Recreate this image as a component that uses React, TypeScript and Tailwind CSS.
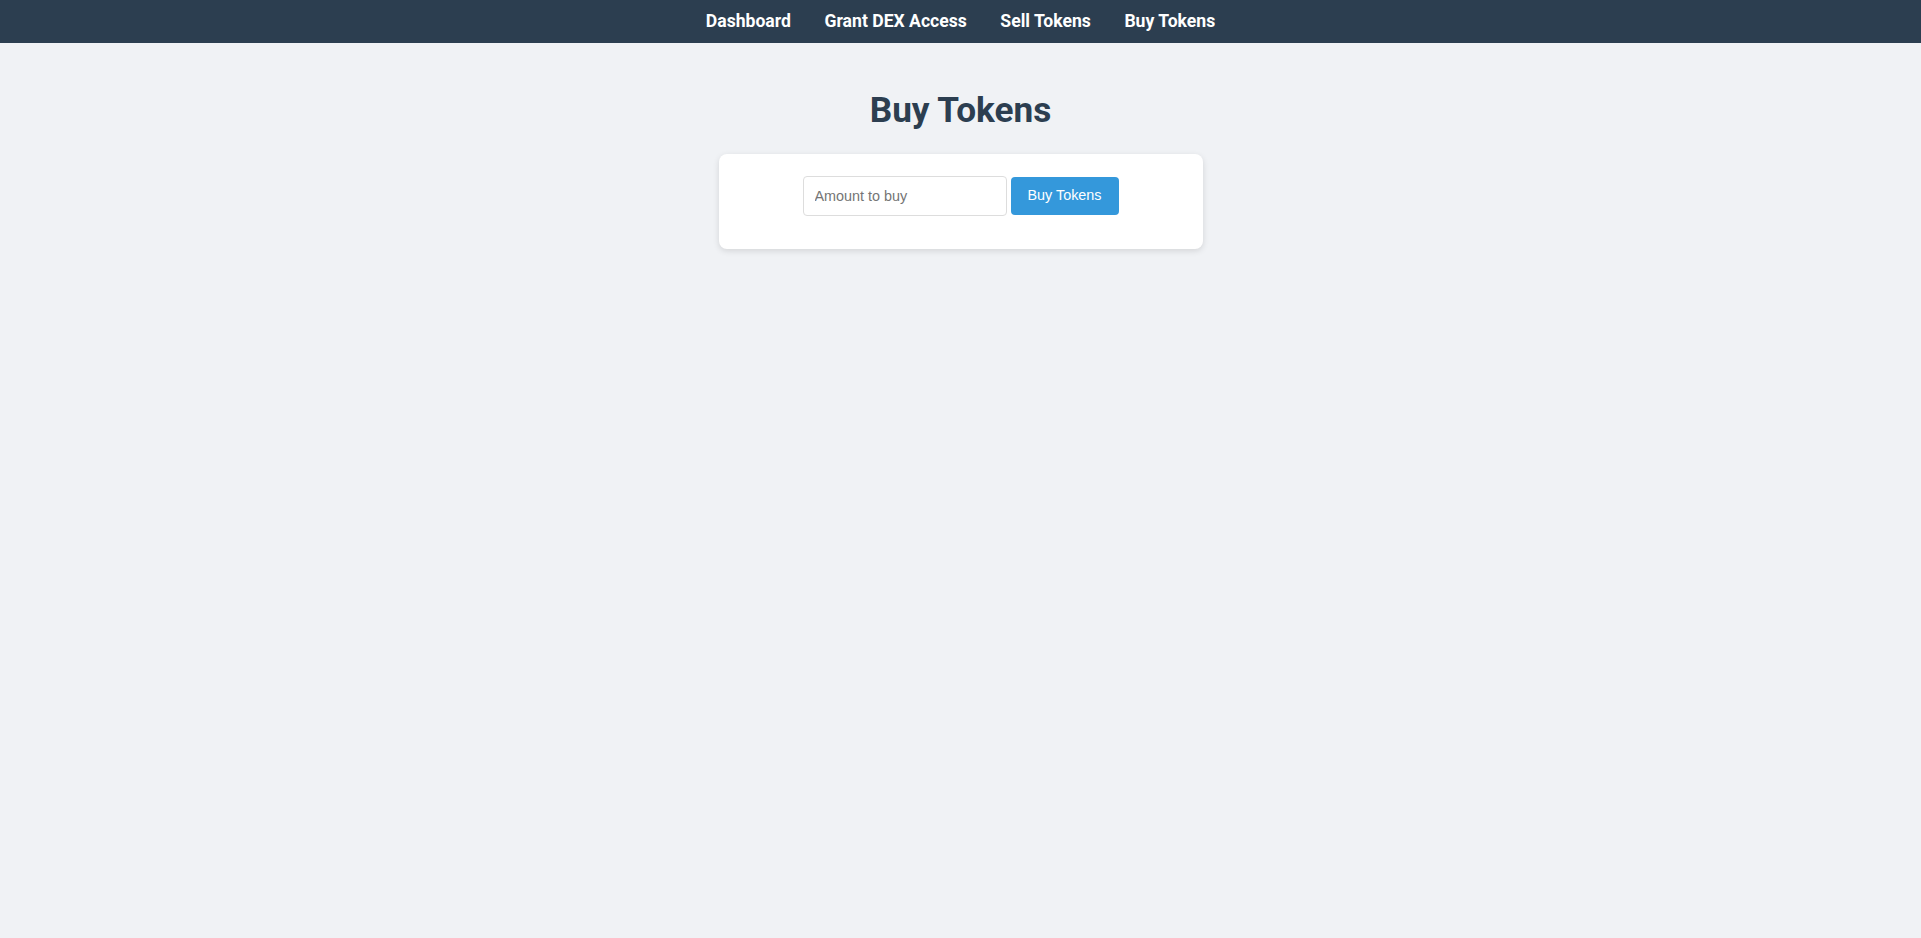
import React from 'react';

const links = ['Dashboard', 'Grant DEX Access', 'Sell Tokens', 'Buy Tokens'];

export default function App() {
  return (
    <div className="min-h-screen bg-[#f0f2f5] font-['Roboto',sans-serif]">
      <nav className="h-[43px] bg-[#2c3e50] flex items-center justify-center gap-[33.5px]">
        {links.map((l) => (
          <a key={l} href="#" className="text-white font-bold text-[17.6px] leading-none">
            {l}
          </a>
        ))}
      </nav>

      <main className="flex flex-col items-center">
        <h1 className="mt-[46px] mb-[23px] text-[35.2px] font-bold text-[#2c3e50] leading-[1.2]">
          Buy Tokens
        </h1>
        <div className="w-[484px] h-[95px] bg-white rounded-lg shadow-[0_2px_6px_rgba(0,0,0,0.12)] pt-[22px] flex justify-center items-start gap-[4px] font-['Liberation_Sans',Arial,sans-serif]">
          <input
            type="text"
            placeholder="Amount to buy"
            className="w-[204px] h-[40px] border border-[#dddddd] rounded px-[11px] text-[14.4px] placeholder:text-[#757575] outline-none"
          />
          <button className="mt-[1px] h-[38px] w-[108px] bg-[#3498db] text-white text-[14.4px] rounded">
            Buy Tokens
          </button>
        </div>
      </main>
    </div>
  );
}
